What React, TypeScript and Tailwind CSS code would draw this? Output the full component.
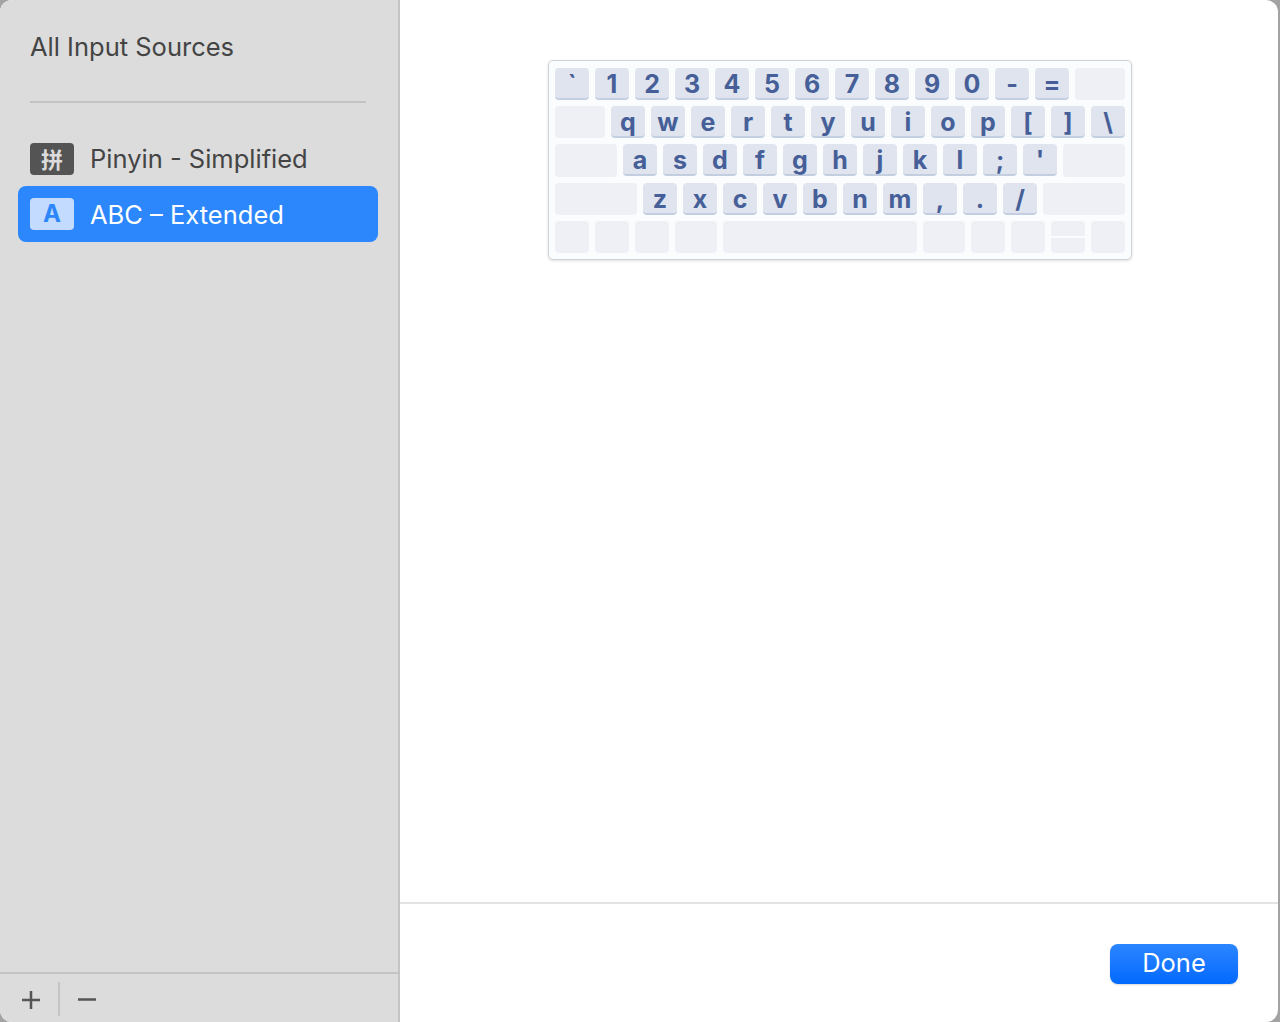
const k = "flex h-[32px] w-[34px] shrink-0 items-center justify-center rounded-[4px] border-b-2 border-[#c4cee1] bg-[#dfe4ee] pt-[3px] text-[25px] leading-none font-bold text-[#465f98]";
const blank = "h-[32px] shrink-0 rounded-[4px] bg-[#eef0f6]";

function Key({ c }: { c: string }) {
  return <div className={k}>{c}</div>;
}

function Keys({ s }: { s: string }) {
  return (
    <>
      {s.split("").map((c, i) => (
        <Key key={i} c={c} />
      ))}
    </>
  );
}

export default function App() {
  return (
    <div className="h-[1022px] w-[1280px] overflow-hidden bg-[#a3a3a3] font-['Inter','Liberation_Sans',sans-serif]">
      <div className="flex h-[1022px] w-[1278px] overflow-hidden rounded-[12px] bg-white">
        <aside className="flex w-[400px] shrink-0 flex-col border-r-2 border-[#c4c4c4] bg-[#dcdcdc]">
          <div className="flex-1">
            <div className="px-[30px] pt-[30px] text-[25.5px] leading-[34px] text-[#444444]">All Input Sources</div>
            <div className="mt-[37px] mr-[32px] ml-[30px] h-[2px] bg-[#c4c4c4]" />
            <div className="mt-[28px] flex h-[55px] items-center gap-[16px] px-[30px] text-[25.5px] text-[#444444]">
              <div className="flex h-[32px] w-[44px] items-center justify-center rounded-[4px] bg-[#545454] pb-[2px] font-['Noto_Sans_CJK_SC',sans-serif] text-[22px] leading-none font-bold text-[#dcdcdc]">拼</div>
              <span className="pt-[2px]">Pinyin - Simplified</span>
            </div>
            <div className="mr-[20px] ml-[18px] flex h-[56px] items-center gap-[16px] rounded-[8px] bg-[#2d87fc] px-[12px] text-[25.5px] text-white">
              <div className="flex h-[32px] w-[44px] items-center justify-center rounded-[4px] bg-[#c2dbff] text-[24px] font-bold text-[#2d87fc]">A</div>
              <span className="pt-[2px]">ABC – Extended</span>
            </div>
          </div>
          <div className="flex h-[50px] items-start border-t-2 border-[#c4c4c4] pt-[8px]">
            <svg width="58" height="34" viewBox="0 0 58 34" fill="none" stroke="#555555" strokeWidth="2.5" className="shrink-0">
              <path d="M22 18H40M31 9V27" />
            </svg>
            <div className="h-[34px] w-[2px] bg-[#c4c4c4]" />
            <svg width="38" height="34" viewBox="0 0 38 34" fill="none" stroke="#555555" strokeWidth="2.5" className="shrink-0">
              <path d="M18 17.5H36" />
            </svg>
          </div>
        </aside>
        <main className="flex flex-1 flex-col">
          <div className="flex-1 pt-[60px]">
            <div className="ml-[148px] flex h-[200px] w-[584px] flex-col gap-[6px] rounded-[5px] border border-[#cdd1d8] bg-[#fbfcfe] px-[6px] pt-[7px] shadow-[0_1px_3px_rgba(0,0,0,0.12)]">
              <div className="flex gap-[6px]">
                <Keys s="`1234567890-=" />
                <div className={`${blank} w-[50px]`} />
              </div>
              <div className="flex gap-[6px]">
                <div className={`${blank} w-[50px]`} />
                <Keys s="qwertyuiop[]\" />
              </div>
              <div className="flex gap-[6px]">
                <div className={`${blank} h-[33px] w-[62px]`} />
                <Keys s="asdfghjkl;'" />
                <div className={`${blank} h-[33px] w-[62px]`} />
              </div>
              <div className="flex gap-[6px]">
                <div className={`${blank} w-[82px]`} />
                <Keys s="zxcvbnm,./" />
                <div className={`${blank} w-[82px]`} />
              </div>
              <div className="flex gap-[6px]">
                <div className={`${blank} w-[34px]`} />
                <div className={`${blank} w-[34px]`} />
                <div className={`${blank} w-[34px]`} />
                <div className={`${blank} w-[42px]`} />
                <div className={`${blank} w-[194px]`} />
                <div className={`${blank} w-[42px]`} />
                <div className={`${blank} w-[34px]`} />
                <div className={`${blank} w-[34px]`} />
                <div className="flex h-[32px] w-[34px] shrink-0 flex-col gap-[2px]">
                  <div className="flex-1 rounded-t-[4px] bg-[#eef0f6]" />
                  <div className="flex-1 rounded-b-[4px] bg-[#eef0f6]" />
                </div>
                <div className={`${blank} w-[34px]`} />
              </div>
            </div>
          </div>
          <div className="flex h-[120px] items-start justify-end border-t-2 border-[#e3e3e3] pt-[40px] pr-[40px]">
            <button className="h-[40px] w-[128px] rounded-[8px] bg-gradient-to-b from-[#2a85ff] to-[#0069fe] pb-[3px] text-[25.5px] leading-[37px] text-white shadow-[0_1px_2px_rgba(0,0,0,0.15)]">Done</button>
          </div>
        </main>
      </div>
    </div>
  );
}
